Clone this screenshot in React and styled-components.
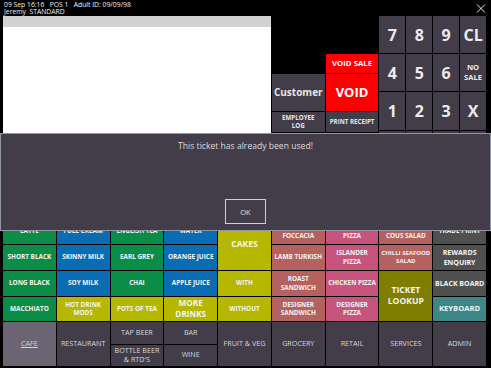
import styled, { createGlobalStyle } from 'styled-components';

const GlobalStyle = createGlobalStyle`
  html, body {
    margin: 0;
    padding: 0;
    background: #000;
  }
  * {
    box-sizing: border-box;
  }
`;

const color = {
  green: '#0b8c47',
  blue: '#0a6db4',
  yellow: '#b5b700',
  rose: '#b4615f',
  pink: '#c6547d',
  olive: '#7e7e00',
  gray: '#505050',
  teal: '#3c8787',
  key: '#433d49',
  keyActive: '#6a6473',
  red: '#ff0000',
};

const font = `'Open Sans', 'Noto Sans', sans-serif`;

const Screen = styled.div`
  position: relative;
  width: 491px;
  height: 368px;
  overflow: hidden;
  background: #000;
  font-family: ${font};
  color: #eee;
`;

const Header = styled.div`
  display: flex;
  justify-content: space-between;
  align-items: flex-start;
  height: 16px;
  padding: 1px 5px 0 4px;
`;

const HeaderInfo = styled.div`
  font-size: 6.8px;
  line-height: 7px;
  color: #f2f2f2;
  white-space: pre;
`;

const CloseIcon = styled.svg`
  margin-top: 3px;
`;

const TopArea = styled.div`
  display: grid;
  grid-template-columns: repeat(9, 1fr);
  column-gap: 1px;
  height: 202px;
  padding: 0 5px 0 3px;
`;

const TicketPanel = styled.div`
  grid-column: 1 / 6;
  display: flex;
  flex-direction: column;
  background: #fff;
`;

const TicketHead = styled.div`
  height: 11px;
  background: #d2d2d2;
`;

const ActionPanel = styled.div`
  grid-column: 6 / 8;
  display: grid;
  grid-template-columns: 1fr 1fr;
  grid-template-rows: 37px 19px 37px 20px 1fr;
  gap: 1px;
`;

const ActionButton = styled.div`
  grid-column: ${(p) => p.$col};
  grid-row: ${(p) => p.$row};
  display: flex;
  align-items: center;
  justify-content: center;
  text-align: center;
  background: ${(p) => p.$bg || color.key};
  color: ${(p) => p.$fg || '#e6e6e6'};
  font-weight: 700;
  font-size: ${(p) => p.$size || 6.4}px;
  line-height: 1.3;
`;

const Keypad = styled.div`
  grid-column: 8 / 10;
  display: grid;
  grid-template-columns: repeat(4, 1fr);
  grid-template-rows: 37px 37px 38px 1fr;
  gap: 1px;
`;

const Key = styled.div`
  display: flex;
  align-items: center;
  justify-content: center;
  text-align: center;
  background: ${color.key};
  color: #ececec;
  font-weight: 700;
  font-size: ${(p) => p.$size || 16}px;
  line-height: 1.25;
`;

const ProductGrid = styled.div`
  display: grid;
  grid-template-columns: repeat(9, 1fr);
  grid-template-rows: 25px 25px 25px 24px 44px;
  gap: 1px;
  margin-top: 1px;
  padding: 0 5px 0 3px;
`;

const Product = styled.div`
  grid-row: span ${(p) => p.$span || 1};
  display: flex;
  align-items: center;
  justify-content: center;
  text-align: center;
  background: ${(p) => p.$bg};
  color: #f4f4f4;
  font-weight: 700;
  font-size: ${(p) => p.$size || 6.4}px;
  line-height: 1.3;
  padding: 0 1px;
`;

const Category = styled.div`
  display: flex;
  align-items: center;
  justify-content: center;
  text-align: center;
  background: ${(p) => (p.$active ? color.keyActive : color.key)};
  color: #d6d6d6;
  font-size: 7.2px;
  line-height: 1.35;
  text-decoration: ${(p) => (p.$active ? 'underline' : 'none')};
`;

const SplitCategory = styled.div`
  display: flex;
  flex-direction: column;
  gap: 1px;

  & > div {
    flex: 1;
  }
`;

const Dialog = styled.div`
  position: absolute;
  top: 133px;
  left: 0;
  width: 491px;
  height: 98px;
  display: flex;
  flex-direction: column;
  align-items: center;
  background: #433d49;
  border: 1px solid #8f96a6;
`;

const DialogText = styled.div`
  margin-top: 6px;
  font-size: 8.6px;
  color: #dcdcdc;
`;

const OkButton = styled.div`
  display: flex;
  align-items: center;
  justify-content: center;
  width: 41px;
  height: 25px;
  margin-top: auto;
  margin-bottom: 6px;
  border: 1.5px solid #cfcfcf;
  font-size: 7.5px;
  color: #e0e0e0;
`;

const products = [
  { label: 'LATTE', bg: color.green },
  { label: 'FULL CREAM', bg: color.blue },
  { label: 'ENGLISH TEA', bg: color.green },
  { label: 'WATER', bg: color.blue },
  { label: 'CAKES', bg: color.yellow, span: 2, size: 8.6 },
  { label: ['CHICKEN', 'FOCCACIA'], bg: color.rose },
  { label: ['MARGHERITA', 'PIZZA'], bg: color.pink },
  { label: ['MOROCCAN', 'COUS SALAD'], bg: color.rose },
  { label: 'TRADE PRINT', bg: color.gray },

  { label: 'SHORT BLACK', bg: color.green },
  { label: 'SKINNY MILK', bg: color.blue },
  { label: 'EARL GREY', bg: color.green },
  { label: 'ORANGE JUICE', bg: color.blue },
  { label: 'LAMB TURKISH', bg: color.rose },
  { label: ['ISLANDER', 'PIZZA'], bg: color.pink },
  { label: ['CHILLI SEAFOOD', 'SALAD'], bg: color.rose, size: 6 },
  { label: ['REWARDS', 'ENQUIRY'], bg: color.gray, size: 7 },

  { label: 'LONG BLACK', bg: color.green },
  { label: 'SOY MILK', bg: color.blue },
  { label: 'CHAI', bg: color.green },
  { label: 'APPLE JUICE', bg: color.blue },
  { label: 'WITH', bg: color.yellow },
  { label: ['ROAST', 'SANDWICH'], bg: color.rose },
  { label: 'CHICKEN PIZZA', bg: color.pink },
  { label: ['TICKET', 'LOOKUP'], bg: color.olive, span: 2, size: 8.6 },
  { label: 'BLACK BOARD', bg: color.gray, size: 7 },

  { label: 'MACCHIATO', bg: color.green },
  { label: ['HOT DRINK', 'MODS'], bg: color.yellow },
  { label: 'POTS OF TEA', bg: color.yellow },
  { label: ['MORE', 'DRINKS'], bg: color.yellow, size: 8.2 },
  { label: 'WITHOUT', bg: color.yellow },
  { label: ['DESIGNER', 'SANDWICH'], bg: color.rose },
  { label: ['DESIGNER', 'PIZZA'], bg: color.pink },
  { label: 'KEYBOARD', bg: color.teal, size: 7.6 },
];

const keys = [
  { label: '7' },
  { label: '8' },
  { label: '9' },
  { label: 'CL' },
  { label: '4' },
  { label: '5' },
  { label: '6' },
  { label: ['NO', 'SALE'], size: 7.6 },
  { label: '1' },
  { label: '2' },
  { label: '3' },
  { label: 'X' },
  { label: '0' },
  { label: '00' },
  { label: '.' },
  { label: 'ENTER', size: 7 },
];

const lines = (label) =>
  Array.isArray(label) ? label.map((l, i) => (i ? [<br key={i} />, l] : l)) : label;

const App = () => {
  return (
    <Screen>
      <GlobalStyle />
      <Header>
        <HeaderInfo>
          {'09 Sep 16:16   POS 1   Adult ID: 09/09/98\nJeremy  STANDARD'}
        </HeaderInfo>
        <CloseIcon width="10" height="9" viewBox="0 0 10 9">
          <path d="M1 0.5 L9 8.5 M9 0.5 L1 8.5" stroke="#f0f0f0" strokeWidth="1" />
        </CloseIcon>
      </Header>

      <TopArea>
        <TicketPanel>
          <TicketHead />
        </TicketPanel>
        <ActionPanel>
          <ActionButton $col={2} $row={2} $bg={color.red} $fg="#fff" $size={7.8}>
            VOID SALE
          </ActionButton>
          <ActionButton $col={1} $row={3} $size={10}>
            Customer
          </ActionButton>
          <ActionButton $col={2} $row={3} $bg={color.red} $fg="#fff" $size={13}>
            VOID
          </ActionButton>
          <ActionButton $col={1} $row={4} $size={6.2}>
            EMPLOYEE
            <br />
            LOG
          </ActionButton>
          <ActionButton $col={2} $row={4} $size={6.2}>
            PRINT RECEIPT
          </ActionButton>
        </ActionPanel>
        <Keypad>
          {keys.map((k, i) => (
            <Key key={i} $size={k.size}>
              {lines(k.label)}
            </Key>
          ))}
        </Keypad>
      </TopArea>

      <ProductGrid>
        {products.map((p, i) => (
          <Product key={i} $bg={p.bg} $span={p.span} $size={p.size}>
            {lines(p.label)}
          </Product>
        ))}
        <Category $active>CAFE</Category>
        <Category>RESTAURANT</Category>
        <SplitCategory>
          <Category>TAP BEER</Category>
          <Category>
            BOTTLE BEER
            <br />
            &amp; RTD'S
          </Category>
        </SplitCategory>
        <SplitCategory>
          <Category>BAR</Category>
          <Category>WINE</Category>
        </SplitCategory>
        <Category>FRUIT &amp; VEG</Category>
        <Category>GROCERY</Category>
        <Category>RETAIL</Category>
        <Category>SERVICES</Category>
        <Category>ADMIN</Category>
      </ProductGrid>

      <Dialog>
        <DialogText>This ticket has already been used!</DialogText>
        <OkButton>OK</OkButton>
      </Dialog>
    </Screen>
  );
};

export default App;
